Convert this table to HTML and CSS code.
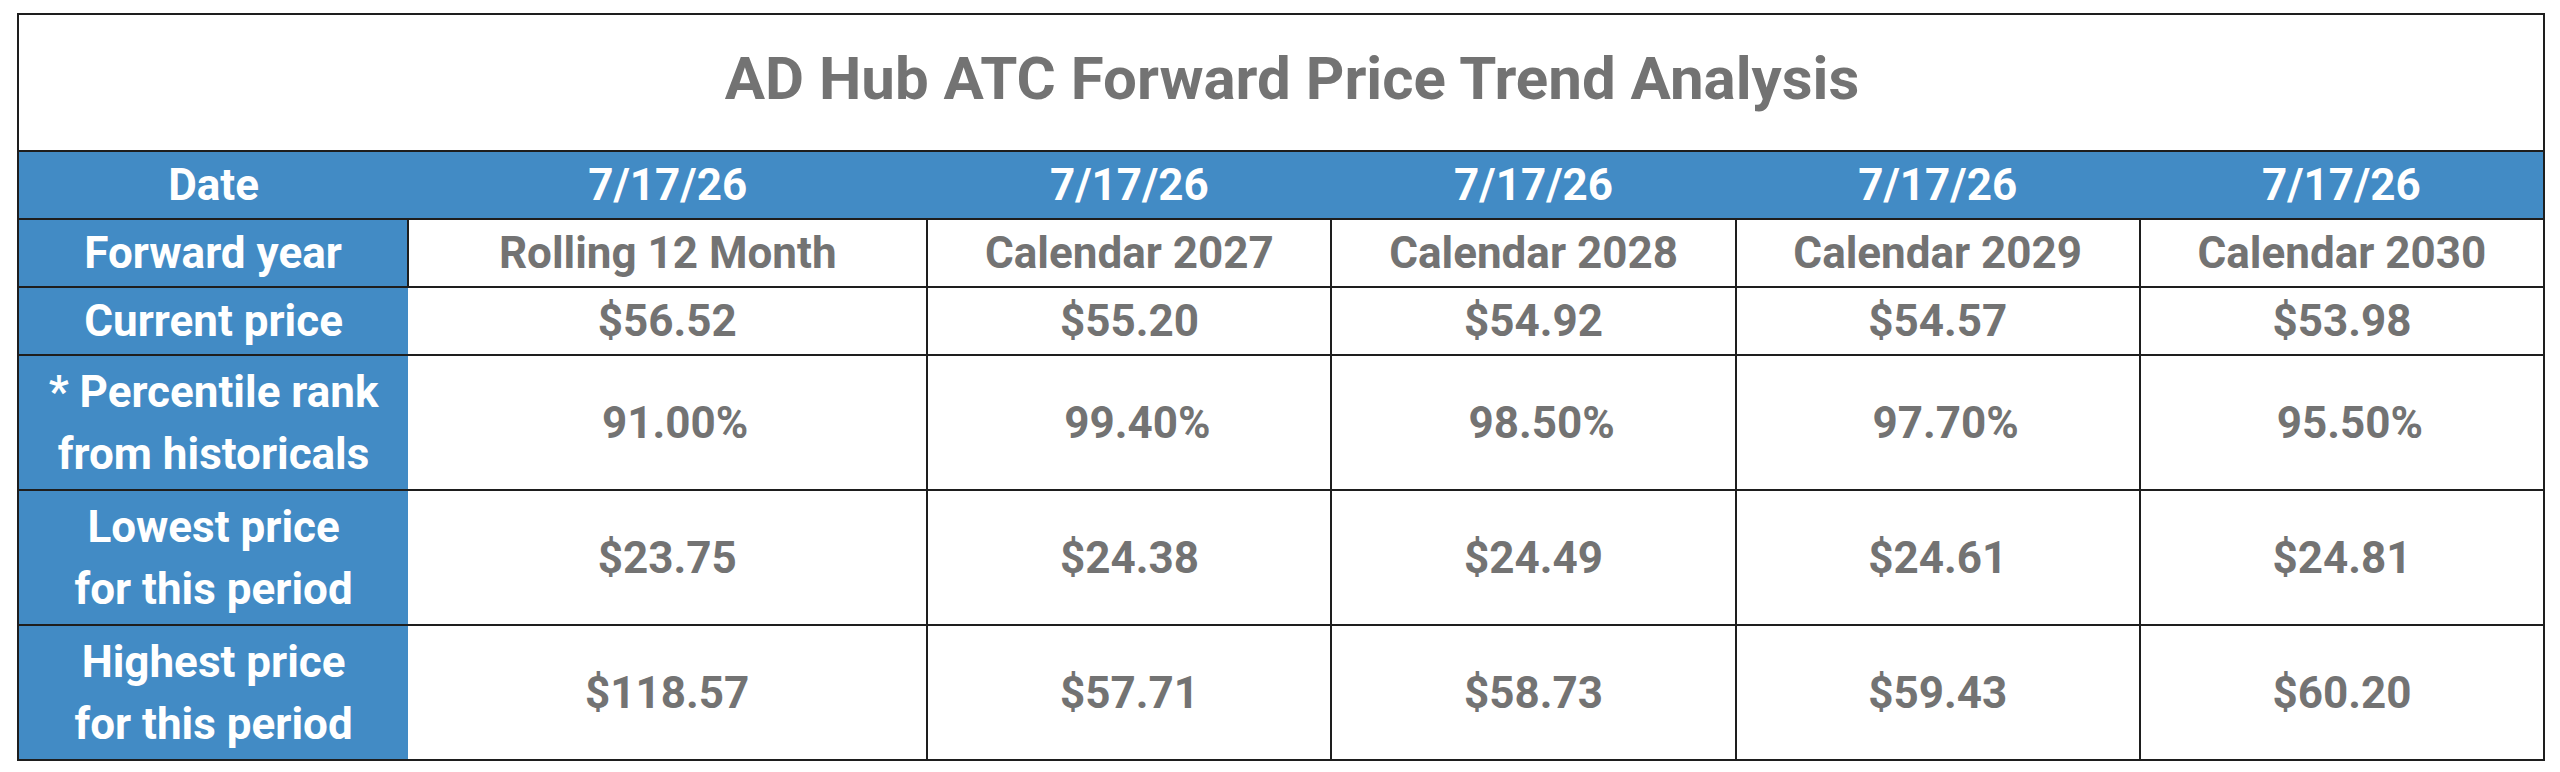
FILE: index.html
```html
<!DOCTYPE html>
<html>
<head>
<meta charset="utf-8">
<link rel="stylesheet" href="styles.css">
</head>
<body>
<div class="wrap">
<table class="trend">
  <colgroup>
    <col class="c-label">
    <col class="c-roll">
    <col class="c-cal">
    <col class="c-cal">
    <col class="c-cal">
    <col class="c-cal">
  </colgroup>
  <tr class="title-row">
    <th colspan="6" class="title">AD Hub ATC Forward Price Trend Analysis</th>
  </tr>
  <tr class="date-row single">
    <th class="label">Date</th>
    <td class="date">7/17/26</td>
    <td class="date">7/17/26</td>
    <td class="date">7/17/26</td>
    <td class="date">7/17/26</td>
    <td class="date">7/17/26</td>
  </tr>
  <tr class="single">
    <th class="label label-ruled">Forward year</th>
    <td class="val first ruled">Rolling 12 Month</td>
    <td class="val">Calendar 2027</td>
    <td class="val">Calendar 2028</td>
    <td class="val">Calendar 2029</td>
    <td class="val">Calendar 2030</td>
  </tr>
  <tr class="single">
    <th class="label">Current price</th>
    <td class="val first">$56.52</td>
    <td class="val">$55.20</td>
    <td class="val">$54.92</td>
    <td class="val">$54.57</td>
    <td class="val">$53.98</td>
  </tr>
  <tr class="double">
    <th class="label">* Percentile rank<br>from historicals</th>
    <td class="val first pct">91.00%</td>
    <td class="val pct">99.40%</td>
    <td class="val pct">98.50%</td>
    <td class="val pct">97.70%</td>
    <td class="val pct">95.50%</td>
  </tr>
  <tr class="double">
    <th class="label">Lowest price<br>for this period</th>
    <td class="val first">$23.75</td>
    <td class="val">$24.38</td>
    <td class="val">$24.49</td>
    <td class="val">$24.61</td>
    <td class="val">$24.81</td>
  </tr>
  <tr class="double">
    <th class="label">Highest price<br>for this period</th>
    <td class="val first">$118.57</td>
    <td class="val">$57.71</td>
    <td class="val">$58.73</td>
    <td class="val">$59.43</td>
    <td class="val">$60.20</td>
  </tr>
</table>
</div>
</body>
</html>
```

FILE: styles.css
```css
html, body {
  margin: 0;
  padding: 0;
  background: #ffffff;
}

.wrap {
  padding: 13px 0 0 17px;
}

.trend {
  border-collapse: collapse;
  table-layout: fixed;
  width: 2528px;
  font-family: Roboto, "Liberation Sans", sans-serif;
  font-weight: 700;
  border: 2px solid #1e1e1e;
}

.c-label { width: 390px; }
.c-roll { width: 519px; }
.c-cal { width: 404px; }

.trend th,
.trend td {
  padding: 0;
  text-align: center;
  vertical-align: middle;
  font-size: 44px;
  line-height: 62px;
  border: 2px solid #1e1e1e;
}

.title-row {
  height: 137px;
}

.trend .title {
  font-size: 60px;
  color: #737373;
  background: #ffffff;
  padding-left: 22px;
  padding-bottom: 8px;
}

.single { height: 68px; }
.double { height: 135px; }

.trend .label {
  background: #428bc5;
  color: #ffffff;
  border-right: none;
}

.trend .label-ruled {
  border-right: 2px solid #1e1e1e;
}

.trend .date {
  background: #428bc5;
  color: #ffffff;
  border-left: none;
  border-right: none;
}

.trend .val {
  background: #ffffff;
  color: #737373;
}

.trend .val.first {
  border-left: none;
}

.trend .val.first.ruled {
  border-left: 2px solid #1e1e1e;
}

.trend .pct {
  padding-left: 16px;
}
```
